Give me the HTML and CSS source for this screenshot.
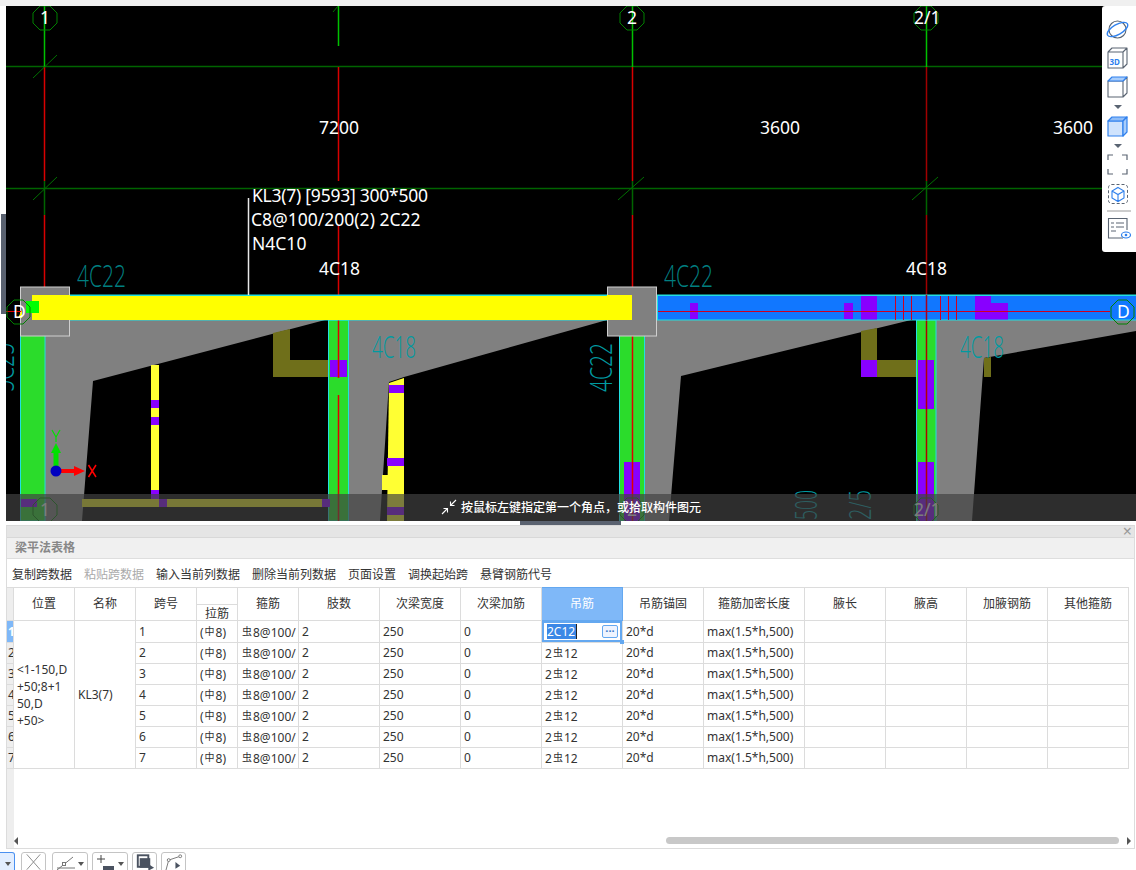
FILE: index.html
```html
<!DOCTYPE html>
<html lang="zh-CN">
<head>
<meta charset="utf-8">
<title>梁平法表格</title>
<link rel="stylesheet" href="styles.css">
</head>
<body>
<div class="top-strip"></div>
<div class="stage">
  <div class="left-strip"><div class="left-handle"></div></div>
  <div class="canvas-wrap">
    <svg class="cad" viewBox="6 6 1130 515" width="1130" height="515">
      <rect x="6" y="6" width="1130" height="515" fill="#000"/>
      <!-- grid -->
      <g fill="none" stroke-width="1.5">
        <path d="M6 66.5H1136M6 188.5H1136" stroke="#006400"/>
        <path d="M44.5 6V67M338.5 6V46M632.5 6V67M926.5 6V67" stroke="#00c000"/>
        <path d="M44.5 181V215M632.5 181V215M926.5 181V215" stroke="#006400"/>
        <path d="M44.5 67V181M44.5 215V295M338.5 67V181M338.5 225V295M632.5 67V181M632.5 215V295" stroke="#d80000"/>
        <path d="M926.5 67V181M926.5 215V295" stroke="#a00000"/>
      </g>
      <path d="M33 78 57 55M33 200 57 177M618 200 644 177M912 200 938 177M333 12 338 6" stroke="#007000" fill="none"/>
      <g fill="none" stroke="#008000">
        <polygon points="40,6 50,6 57,13 57,23 50,30 40,30 33,23 33,13"/>
        <polygon points="627,6 637,6 644,13 644,23 637,30 627,30 620,23 620,13"/>
        <polygon points="921,6 931,6 938,13 938,23 931,30 921,30 914,23 914,13"/>
      </g>
      <!-- grey haunches -->
      <g fill="#808080">
        <polygon points="45,320 325,320 93,381 82,521 45,521"/>
        <polygon points="349,320 607,320 404,377 389,382 380,521 349,521"/>
        <polygon points="645,320 911,320 681,376 669,521 645,521"/>
        <polygon points="936,320 1136,320 1136,331 984,358 972,521 936,521"/>
      </g>
      <!-- olive -->
      <g fill="#6f6f1a">
        <polygon points="273,333 290,329 290,360 329,360 329,377 273,377"/>
        <polygon points="861,331 877,328 877,360 917,360 917,377 861,377"/>
        <polygon points="984,358 991,357 991,377 984,377"/>
      </g>
      <!-- columns -->
      <g fill="#2bdc2b" stroke="#22e0e0">
        <rect x="20.5" y="320" width="24.5" height="201"/>
        <rect x="328.5" y="320" width="20" height="201"/>
        <rect x="619.5" y="320" width="25" height="201"/>
        <rect x="916.5" y="320" width="19.500" height="201"/>
      </g>
      <!-- thin yellow bars -->
      <g fill="#ffff33">
        <rect x="151" y="365" width="8" height="135"/>
        <polygon points="389,383 404,378 404,521 387,521"/>
        <rect x="382" y="475" width="8" height="15"/>
      </g>
      <!-- lower bar under the prompt -->
      <rect x="82" y="499" width="246" height="8" fill="#f0f020"/>
      <!-- purple -->
      <g fill="#8800ff">
        <rect x="330" y="360" width="17" height="17"/>
        <rect x="861" y="360" width="16" height="17"/>
        <rect x="918" y="360" width="16" height="49"/>
        <rect x="918" y="462" width="16" height="59"/>
        <rect x="624" y="462" width="16" height="59"/>
        <rect x="151" y="400" width="8" height="8"/>
        <rect x="151" y="417" width="8" height="8"/>
        <rect x="151" y="490" width="8" height="9"/>
        <rect x="389" y="385" width="15" height="8"/>
        <rect x="387" y="458" width="17" height="8"/>
        <rect x="387" y="507" width="17" height="8"/>
        <rect x="21" y="499" width="16" height="8"/>
        <rect x="159" y="499" width="8" height="8"/>
        <rect x="322" y="499" width="8" height="8"/>
      </g>
      <!-- column axis lines -->
      <path d="M338.5 320V378M338.5 395V521M632.5 336V521" stroke="#e00000" stroke-width="1.5"/>
      <path d="M926.5 320V521" stroke="#b00000" stroke-width="1.5"/>
      <!-- beams -->
      <rect x="70" y="294.5" width="1066" height="26" fill="#22e0e0"/>
      <rect x="32" y="296" width="600" height="24" fill="#ffff00"/>
      <rect x="658" y="296" width="478" height="23.5" fill="#1177ff"/>
      <!-- boxes -->
      <rect x="20.500" y="287" width="49" height="49" fill="#808080" stroke="#cfcfcf"/>
      <rect x="607.500" y="287" width="49" height="49" fill="#808080" stroke="#cfcfcf"/>
      <rect x="32" y="295" width="38" height="25" fill="#ffff00"/>
      <rect x="607" y="295" width="25" height="25" fill="#ffff00"/>
      <rect x="26" y="301" width="13" height="12" fill="#00ff00"/>
      <!-- beam details -->
      <g fill="#8800ff">
        <rect x="690" y="303" width="8" height="16"/>
        <rect x="844" y="303" width="9" height="16"/>
        <rect x="861" y="296" width="16" height="23.500"/>
        <rect x="975" y="296" width="16" height="23.500"/>
        <rect x="991" y="303" width="17" height="16.500"/>
      </g>
      <path d="M658 311.500H1110M895.500 296V320M903.500 296V320M911.500 296V320M940.500 296V320M948.500 296V320M956.500 296V320" stroke="#d00020"/>
      <path d="M926.500 295V320" stroke="#a80020" stroke-width="1.500"/>
      <path d="M6 311.500H22" stroke="#e00000"/>
      <!-- row axes and lower axis bubbles -->
      <polygon points="18,318 22,310 22,318" fill="#ffff00"/>
      <g fill="none" stroke="#008000">
        <polygon points="14,300 23,300 30,307 30,317 23,324 14,324 7,317 7,307"/>
        <polygon points="1118,300 1127,300 1134,307 1134,317 1127,324 1118,324 1111,317 1111,307"/>
        <polygon points="40,498 50,498 57,505 57,515 50,522 40,522 33,515 33,505"/>
        <polygon points="627,498 637,498 644,505 644,515 637,522 627,522 620,515 620,505"/>
        <polygon points="921,498 931,498 938,505 938,515 931,522 921,522 914,515 914,505"/>
      </g>
      <!-- teal annotation -->
      <g class="teal">
        <text x="77" y="287" textLength="49" lengthAdjust="spacingAndGlyphs">4C22</text>
        <text x="664" y="287" textLength="49" lengthAdjust="spacingAndGlyphs">4C22</text>
      </g>
      <g class="teal teal-lit">
        <text x="372" y="358" textLength="44" lengthAdjust="spacingAndGlyphs">4C18</text>
        <text x="960" y="358" textLength="44" lengthAdjust="spacingAndGlyphs">4C18</text>
        <text transform="translate(612 392) rotate(-90)" textLength="49" lengthAdjust="spacingAndGlyphs">4C22</text>
        <text transform="translate(14 392) rotate(-90)" textLength="49" lengthAdjust="spacingAndGlyphs">5C25</text>
        <text transform="translate(817 520) rotate(-90)" textLength="30" lengthAdjust="spacingAndGlyphs">500</text>
        <text transform="translate(871 520) rotate(-90)" textLength="30" lengthAdjust="spacingAndGlyphs">2/5</text>
      </g>
      <!-- leader and labels -->
      <path d="M248.500 198V295" stroke="#e8e8e8" stroke-width="1.500"/>
      <g class="label">
        <text x="252" y="202" textLength="176" lengthAdjust="spacing">KL3(7) [9593] 300*500</text>
        <text x="251" y="226">C8@100/200(2) 2C22</text>
        <text x="252" y="250">N4C10</text>
        <text x="319" y="134">7200</text>
        <text x="760" y="134">3600</text>
        <text x="1053" y="134">3600</text>
        <text x="319" y="275">4C18</text>
        <text x="906" y="275">4C18</text>
        <text x="40" y="24">1</text>
        <text x="627" y="24">2</text>
        <text x="914" y="24">2/1</text>
        <text x="13" y="318">D</text>
        <text x="1117" y="318">D</text>
        <text x="40" y="516">1</text>
        <text x="627" y="516">2</text>
        <text x="914" y="516">2/1</text>
      </g>
      <!-- axes gizmo -->
      <path d="M56 471V452" stroke="#00e000" stroke-width="5"/>
      <polygon points="56,443 51,453 61,453" fill="#00e000"/>
      <path d="M56 471H76" stroke="#ff0000" stroke-width="4"/>
      <polygon points="85,471 74,466 74,476" fill="#ff0000"/>
      <circle cx="56" cy="471" r="5.500" fill="#0000c0"/>
      <path d="M52 430 56 437 60 430M56 437V442" stroke="#00e000" stroke-width="1.200" fill="none"/>
      <path d="M88.500 465 96 477M96 465 88.500 477" stroke="#ff0000" stroke-width="1.500" fill="none"/>
    </svg>

    <aside class="view-tools">
      <svg viewBox="0 0 34 246" width="34" height="246" fill="none">
        <g transform="translate(15.500 23.500)">
          <circle r="8.500" stroke="#5a6472" stroke-width="1.100"/>
          <ellipse rx="11.500" ry="5" transform="rotate(-30)" stroke="#2f80ed" stroke-width="1.300"/>
        </g>
        <g stroke="#5a6472" stroke-width="1.100" stroke-linejoin="round">
          <path d="M6 46H21V62H6ZM6 46 10 42H25V58L21 62M21 46 25 42"/>
          <path d="M6 75H21V91H6ZM21 75 25 71V87L21 91"/>
          <path d="M6 75 10 71H25L21 75Z" fill="#a8cdfb" stroke="#2f80ed"/>
        </g>
        <text class="tag3d" x="7.500" y="59">3D</text>
        <polygon points="12,99 20,99 16,103" fill="#5a6472"/>
        <g stroke="#2f80ed" stroke-width="1.200" stroke-linejoin="round">
          <path d="M6 115H21V130H6Z" fill="#cfe3fd"/>
          <path d="M6 115 10 111H25L21 115Z" fill="#8fbdf8"/>
          <path d="M21 115 25 111V126L21 130Z" fill="#a8cdfb"/>
        </g>
        <polygon points="12,138 20,138 16,142" fill="#5a6472"/>
        <path d="M6 154V149H11M20 149H25V154M25 163V168H20M11 168H6V163" stroke="#5a6472" stroke-width="1.200"/>
        <rect x="6.500" y="178.500" width="19" height="19" rx="3" stroke="#5a6472" stroke-dasharray="3 2"/>
        <path d="M16 181.500 22 185V192L16 195.500 10 192V185ZM10 185 16 188.500 22 185M16 188.500V195.500" stroke="#2f80ed" stroke-width="1.100"/>
        <path d="M5 205H29" stroke="#9a9a9a"/>
        <path d="M21 232H6.500V212.500H25V224" stroke="#5a6472" stroke-width="1.100"/>
        <path d="M9 217H12M14 217H22M9 221H12M14 221H22M9 225H14" stroke="#5a6472"/>
        <ellipse cx="24" cy="229" rx="4.500" ry="3" fill="#fff" stroke="#2f80ed" stroke-width="1.200"/>
        <circle cx="24" cy="229" r="1.300" fill="#2f80ed"/>
      </svg>
    </aside>

    <div class="prompt">
      <svg class="prompt-icon" viewBox="0 0 16 16" width="16" height="16" fill="none" stroke="#fff" stroke-width="1.100">
        <path d="M15 1 9.500 6.500M9.500 2.500V6.500H13.500M1 15 6.500 9.500M2.500 9.500H6.500V13.500"/>
      </svg>
      <span>按鼠标左键指定第一个角点，或拾取构件图元</span>
    </div>
  </div>
</div>

<div class="splitter"><div class="split-tab"></div></div>

<section class="panel">
  <div class="panel-bar"><span class="panel-close">×</span></div>
  <h2 class="panel-title">梁平法表格</h2>
  <div class="panel-tools">
    <span>复制跨数据</span>
    <span class="off">粘贴跨数据</span>
    <span>输入当前列数据</span>
    <span>删除当前列数据</span>
    <span>页面设置</span>
    <span>调换起始跨</span>
    <span>悬臂钢筋代号</span>
  </div>
  <div class="sheet">
    <div class="gutter"></div>
    <table class="grid">
      <colgroup>
        <col class="c-idx"><col class="c-60"><col class="c-60"><col class="c-60"><col class="c-40"><col class="c-60">
        <col class="c-80"><col class="c-80"><col class="c-80"><col class="c-80"><col class="c-80"><col class="c-100">
        <col class="c-80"><col class="c-80"><col class="c-80"><col class="c-80">
      </colgroup>
      <thead>
        <tr class="h1">
          <th rowspan="2" class="idx"></th>
          <th rowspan="2">位置</th><th rowspan="2">名称</th><th rowspan="2">跨号</th>
          <th></th>
          <th rowspan="2">箍筋</th><th rowspan="2">肢数</th><th rowspan="2">次梁宽度</th><th rowspan="2">次梁加筋</th>
          <th rowspan="2" class="sel-head">吊筋</th>
          <th rowspan="2">吊筋锚固</th><th rowspan="2">箍筋加密长度</th><th rowspan="2">腋长</th><th rowspan="2">腋高</th><th rowspan="2">加腋钢筋</th><th rowspan="2">其他箍筋</th>
        </tr>
        <tr class="h2"><th>拉筋</th></tr>
      </thead>
      <tbody>
        <tr>
          <td class="idx idx-on">1</td>
          <td rowspan="7" class="merged">&lt;1-150,D<br>+50;8+1<br>50,D<br>+50&gt;</td>
          <td rowspan="7" class="merged">KL3(7)</td>
          <td>1</td><td>(<span class="rb">中</span>8)</td><td><span class="rb">虫</span>8@100/</td><td>2</td><td>250</td><td>0</td>
          <td class="editing"><span class="edit-box"><span class="edit-text">2C12</span><span class="edit-btn">···</span></span><i class="edit-handle"></i></td>
          <td>20*d</td><td>max(1.5*h,500)</td><td></td><td></td><td></td><td></td>
        </tr>
        <tr><td class="idx">2</td><td>2</td><td>(<span class="rb">中</span>8)</td><td><span class="rb">虫</span>8@100/</td><td>2</td><td>250</td><td>0</td><td>2<span class="rb">虫</span>12</td><td>20*d</td><td>max(1.5*h,500)</td><td></td><td></td><td></td><td></td></tr>
        <tr><td class="idx">3</td><td>3</td><td>(<span class="rb">中</span>8)</td><td><span class="rb">虫</span>8@100/</td><td>2</td><td>250</td><td>0</td><td>2<span class="rb">虫</span>12</td><td>20*d</td><td>max(1.5*h,500)</td><td></td><td></td><td></td><td></td></tr>
        <tr><td class="idx">4</td><td>4</td><td>(<span class="rb">中</span>8)</td><td><span class="rb">虫</span>8@100/</td><td>2</td><td>250</td><td>0</td><td>2<span class="rb">虫</span>12</td><td>20*d</td><td>max(1.5*h,500)</td><td></td><td></td><td></td><td></td></tr>
        <tr><td class="idx">5</td><td>5</td><td>(<span class="rb">中</span>8)</td><td><span class="rb">虫</span>8@100/</td><td>2</td><td>250</td><td>0</td><td>2<span class="rb">虫</span>12</td><td>20*d</td><td>max(1.5*h,500)</td><td></td><td></td><td></td><td></td></tr>
        <tr><td class="idx">6</td><td>6</td><td>(<span class="rb">中</span>8)</td><td><span class="rb">虫</span>8@100/</td><td>2</td><td>250</td><td>0</td><td>2<span class="rb">虫</span>12</td><td>20*d</td><td>max(1.5*h,500)</td><td></td><td></td><td></td><td></td></tr>
        <tr><td class="idx">7</td><td>7</td><td>(<span class="rb">中</span>8)</td><td><span class="rb">虫</span>8@100/</td><td>2</td><td>250</td><td>0</td><td>2<span class="rb">虫</span>12</td><td>20*d</td><td>max(1.5*h,500)</td><td></td><td></td><td></td><td></td></tr>
      </tbody>
    </table>
    <div class="scrollbar">
      <i class="arrow-l"></i>
      <div class="track"><div class="thumb"></div></div>
      <i class="arrow-r"></i>
    </div>
  </div>
</section>

<footer class="dock">
  <button class="tool tool-on tool-cut"><i class="caret"></i></button>
  <button class="tool tool-s tool-x">
    <svg viewBox="0 0 24 18" width="24" height="18" fill="none" stroke="#8a8a8a"><path d="M5 1 19 17M19 1 5 17"/></svg>
  </button>
  <button class="tool tool-l">
    <svg viewBox="0 0 24 18" width="24" height="18" fill="none" stroke="#777"><path d="M4 17 20 4M4 15H22"/><rect x="9.500" y="9.500" width="3" height="3" fill="#fff"/></svg>
    <i class="caret"></i>
  </button>
  <button class="tool tool-l">
    <svg viewBox="0 0 24 18" width="24" height="18" fill="none"><path d="M4 6H12M8 2V10" stroke="#444"/><rect x="10" y="13" width="11" height="6" fill="#4a5260"/></svg>
    <i class="caret"></i>
  </button>
  <button class="tool tool-s">
    <svg viewBox="0 0 24 18" width="24" height="18" fill="none"><rect x="5" y="2" width="11" height="12" fill="#fff" stroke="#4a5260" stroke-width="2"/><rect x="7" y="5" width="11" height="10" fill="#4a5260"/><polygon points="16,11 22,15 16,18" fill="#4a5260"/></svg>
  </button>
  <button class="tool tool-s">
    <svg viewBox="0 0 24 18" width="24" height="18" fill="none" stroke="#777"><path d="M4 18 7 7 19 3"/><circle cx="7" cy="7" r="1.500" fill="#fff"/><circle cx="19" cy="3" r="1.500" fill="#fff"/><polygon points="14,9 19,13 14,16" fill="#4a5260" stroke="none"/></svg>
  </button>
</footer>
</body>
</html>
```
FILE: styles.css
```css
html, body {
  margin: 0;
  padding: 0;
  background: #fff;
  overflow: hidden;
}
body {
  width: 1136px;
  height: 870px;
  font-family: "Noto Sans", "Noto Sans CJK SC", sans-serif;
  font-size: 12px;
  color: #333;
  display: flex;
  flex-direction: column;
}
.top-strip {
  height: 6px;
  background: #f0f0f0;
}
.stage {
  display: flex;
  height: 515px;
}
.left-strip {
  width: 6px;
  padding-top: 208px;
  box-sizing: border-box;
}
.left-handle {
  width: 5px;
  margin-left: 1px;
  height: 100px;
  background: #5a6270;
}
.canvas-wrap {
  position: relative;
  width: 1130px;
  height: 515px;
}
.cad {
  display: block;
}
.teal text {
  font-family: "Open Sans", sans-serif;
  font-weight: 300;
  font-size: 31px;
  fill: #007f80;
}
.teal-lit text {
  fill: #009aa0;
}
.label text {
  font-family: "Noto Sans", sans-serif;
  font-size: 17.500px;
  fill: #fff;
}
.tag3d {
  font-family: "Noto Sans", sans-serif;
  font-size: 8px;
  font-weight: 700;
  fill: #2f80ed;
}
.view-tools {
  position: absolute;
  right: 0;
  top: 0;
  width: 34px;
  height: 246px;
  background: #fff;
  border-radius: 3px 0 0 3px;
}
.view-tools svg {
  display: block;
}
.prompt {
  position: absolute;
  left: 0;
  right: 0;
  bottom: 0;
  height: 27px;
  background: rgba(65, 65, 65, 0.69);
  display: flex;
  align-items: center;
  justify-content: center;
  gap: 4px;
  color: #fff;
  font-size: 12px;
  font-weight: 500;
  padding-bottom: 2px;
  box-sizing: border-box;
}
.prompt-icon {
  flex: none;
}
.splitter {
  height: 4px;
  padding-left: 520px;
}
.split-tab {
  width: 101px;
  height: 4px;
  background: #5a6270;
}
.panel {
  margin-left: 6px;
  width: 1129px;
  height: 324px;
  box-sizing: border-box;
  border: 1px solid #dcdcdc;
  border-top-color: #d8d8d8;
  display: flex;
  flex-direction: column;
}
.panel-bar {
  height: 11px;
  background: #e5e5e5;
  border-bottom: 1px solid #d8d8d8;
  display: flex;
  justify-content: flex-end;
  align-items: center;
  padding-right: 2px;
}
.panel-close {
  font-size: 16px;
  line-height: 11px;
  color: #999;
}
.panel-title {
  margin: 0;
  height: 21px;
  line-height: 20px;
  padding-left: 8px;
  font-size: 12px;
  font-weight: 700;
  color: #888;
  background: #f0f0f0;
  border-bottom: 1px solid #dedede;
  box-sizing: border-box;
}
.panel-tools {
  height: 29px;
  display: flex;
  align-items: center;
  gap: 12px;
  padding-left: 5px;
  flex: none;
}
.panel-tools .off {
  color: #aaa;
}
.sheet {
  position: relative;
  flex: 1;
  min-height: 0;
}
.grid {
  table-layout: fixed;
  border-collapse: collapse;
  width: 1122px;
  margin-left: -1px;
  margin-top: -1px;
  position: relative;
  z-index: 1;
}
.c-idx { width: 7px; }
.c-60 { width: 61px; }
.c-40 { width: 41px; }
.c-80 { width: 81px; }
.c-100 { width: 101px; }
.grid th, .grid td {
  border: 1px solid #dcdcdc;
  padding: 0 0 0 3px;
  font-weight: 400;
  height: 21px;
  line-height: 16px;
  white-space: nowrap;
  overflow: hidden;
  text-align: left;
  box-sizing: border-box;
}
.grid th {
  text-align: center;
  padding: 0;
  height: 17px;
}
.grid .h2 th {
  height: 16px;
  padding-top: 2px;
  line-height: 13px;
}
.grid .idx {
  padding: 0 0 0 1px;
  background: #eee;
  text-align: left;
  overflow: hidden;
}
.grid .idx-on {
  background: #7fb8f8;
  color: #fff;
  font-weight: 700;
}
.grid .sel-head {
  background: #7fb8f8;
  border: 1px solid #64a8f0;
  color: #fff;
}
.grid .merged {
  white-space: normal;
  line-height: 17px;
}
.rb {
  font-size: 10px;
  vertical-align: 2px;
  padding: 0 1px;
}
.grid .editing {
  position: relative;
  padding: 0;
  overflow: visible;
}
.edit-box {
  display: flex;
  align-items: center;
  justify-content: space-between;
  height: 21px;
  box-sizing: border-box;
  border: 2px solid #64a8f0;
  padding: 0 2px 0 3px;
}
.edit-text {
  background: #3b88e6;
  color: #fff;
  width: 30px;
  line-height: 15px;
  border-right: 1px solid #222;
  box-sizing: border-box;
}
.edit-btn {
  width: 16px;
  height: 13px;
  box-sizing: border-box;
  border: 1px solid #64a8f0;
  border-radius: 2px;
  background: #eef4ff;
  color: #3b78c8;
  font-size: 11px;
  font-weight: 700;
  line-height: 10px;
  text-align: center;
}
.edit-handle {
  position: absolute;
  right: -2px;
  bottom: -2px;
  width: 4px;
  height: 4px;
  background: #64a8f0;
}
.gutter {
  position: absolute;
  left: 0;
  top: 0;
  bottom: 0;
  width: 7px;
  background: #eee;
}
.scrollbar {
  position: absolute;
  left: 7px;
  right: 0;
  bottom: 2px;
  height: 11px;
  display: flex;
  align-items: center;
  background: #fff;
}
.track {
  flex: 1;
  height: 7px;
  margin: 0 4px 0 5px;
}
.thumb {
  margin-left: 643px;
  width: 453px;
  height: 7px;
  background: #c8c8c8;
  border-radius: 4px;
}
.arrow-l, .arrow-r {
  width: 0;
  height: 0;
  border-top: 4px solid transparent;
  border-bottom: 4px solid transparent;
}
.arrow-l {
  border-right: 4px solid #555;
}
.arrow-r {
  border-left: 4px solid #555;
  margin-right: 3px;
}
.dock {
  display: flex;
  gap: 4px;
  height: 21px;
  padding-top: 3px;
  box-sizing: border-box;
  align-items: flex-start;
  overflow: hidden;
}
.tool {
  flex: none;
  margin: 0;
  padding: 0;
  height: 26px;
  background: #fff;
  border: 1px solid #c4c4c4;
  border-radius: 3px;
  display: flex;
  align-items: flex-start;
  position: relative;
}
.tool-s { width: 25px; }
.tool-l { width: 36px; }
.tool-x { margin-right: 2px; }
.tool-on {
  background: #e2eeff;
  border-color: #4a90f0;
}
.tool-cut {
  width: 15px;
  border-left: none;
  border-radius: 0 3px 3px 0;
  margin-right: 2px;
}
.caret {
  position: absolute;
  right: 3px;
  top: 9px;
  width: 0;
  height: 0;
  border-left: 3.500px solid transparent;
  border-right: 3.500px solid transparent;
  border-top: 4px solid #555;
}
```
